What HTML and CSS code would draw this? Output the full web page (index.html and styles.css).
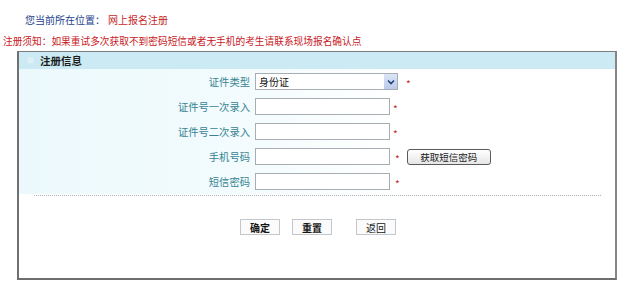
FILE: index.html
```html
<!DOCTYPE html>
<html lang="zh-CN">
<head>
<meta charset="utf-8">
<title>网上报名注册</title>
<link rel="stylesheet" href="styles.css">
</head>
<body>
<div class="location"><span class="loc-label">您当前所在位置：</span><span class="loc-current">网上报名注册</span></div>
<div class="notice">注册须知：如果重试多次获取不到密码短信或者无手机的考生请联系现场报名确认点</div>
<div class="box">
  <div class="box-head"><span class="head-icon"></span><span class="head-title">注册信息</span></div>
  <div class="rows">
    <div class="row">
      <label class="label">证件类型</label>
      <div class="select"><span class="select-text">身份证</span><span class="select-arrow"><svg width="8" height="6" viewBox="0 0 8 6"><path d="M1 1.5 L4 4.5 L7 1.5" fill="none" stroke="#24407a" stroke-width="1.6"/></svg></span></div>
      <span class="req req-wide">*</span>
    </div>
    <div class="row">
      <label class="label">证件号一次录入</label>
      <div class="input"></div>
      <span class="req">*</span>
    </div>
    <div class="row">
      <label class="label">证件号二次录入</label>
      <div class="input"></div>
      <span class="req">*</span>
    </div>
    <div class="row">
      <label class="label">手机号码</label>
      <div class="input"></div>
      <span class="req req-mid">*</span>
      <span class="sms-btn">获取短信密码</span>
    </div>
    <div class="row">
      <label class="label">短信密码</label>
      <div class="input"></div>
      <span class="req req-mid">*</span>
    </div>
  </div>
  <div class="divider"></div>
  <div class="actions">
    <span class="btn">确定</span>
    <span class="btn btn-reset">重置</span>
    <span class="btn btn-back">返回</span>
  </div>
</div>
</body>
</html>
```

FILE: styles.css
```css
html, body {
  margin: 0;
  padding: 0;
  background: #ffffff;
}
body {
  font-family: "Noto Sans CJK SC", "Liberation Sans", sans-serif;
  font-size: 10px;
  color: #222;
  width: 627px;
  height: 291px;
  overflow: hidden;
}
.location {
  padding: 14px 0 0 25px;
  line-height: 12px;
  height: 12px;
}
.loc-label {
  color: #233f8c;
  margin-right: 3px;
}
.loc-current {
  color: #c41f1f;
}
.notice {
  margin-top: 9px;
  padding-left: 3px;
  line-height: 12px;
  height: 12px;
  font-size: 9.7px;
  color: #c8201e;
}
.box {
  margin: 4px 0 0 17px;
  width: 600px;
  height: 229px;
  box-sizing: border-box;
  border: 1px solid #7c7c7c;
  border-left: 2px solid #707070;
  border-bottom: 2px solid #6e6e6e;
  border-right: 2px solid #858585;
  display: flex;
  flex-direction: column;
}
.box-head {
  height: 17px;
  background: #cbeaf3;
  display: flex;
  align-items: center;
}
.head-icon {
  width: 5px;
  height: 5px;
  margin-left: 8px;
  background: #dff1f7;
  border: 1px solid #d3ebf3;
}
.head-title {
  margin-left: 6px;
  font-weight: bold;
  font-size: 10.5px;
  color: #1c1c1c;
}
.rows {
  background: linear-gradient(to right, #ecf9fc 0%, #f2fbfd 35%, #ffffff 64%);
  display: flex;
  flex-direction: column;
}
.row {
  height: 25px;
  display: flex;
  align-items: center;
}
.label {
  width: 231px;
  text-align: right;
  color: #368392;
  margin-right: 5px;
  font-size: 10.3px;
}
.input {
  width: 135px;
  height: 17px;
  box-sizing: border-box;
  border: 1px solid #a7adb3;
  background: #ffffff;
}
.select {
  width: 143px;
  height: 17px;
  box-sizing: border-box;
  border: 1px solid #a7adb3;
  background: #ffffff;
  display: flex;
  align-items: center;
  justify-content: space-between;
}
.select-text {
  padding-left: 3px;
  color: #111;
}
.select-arrow {
  width: 13px;
  height: 15px;
  background: linear-gradient(#dbe5f7, #bccbeb);
  display: flex;
  align-items: center;
  justify-content: center;
}
.req {
  color: #c22828;
  margin-left: 3px;
  font-size: 10px;
  line-height: 10px;
  margin-top: 4px;
}
.req-wide {
  margin-left: 8px;
}
.req-mid {
  margin-left: 5px;
}
.sms-btn {
  margin-left: 7px;
  width: 84px;
  height: 16px;
  box-sizing: border-box;
  border: 1px solid #5a5a5a;
  border-radius: 3px;
  background: linear-gradient(#ffffff, #e6e6e6);
  display: flex;
  align-items: center;
  justify-content: center;
  color: #1a1a1a;
  font-size: 9.5px;
}
.divider {
  margin: 1px 14px 0 15px;
  border-top: 1px dotted #a9b3b9;
  height: 0;
}
.actions {
  margin-top: 23px;
  display: flex;
  justify-content: center;
  padding-left: 2px;
}
.btn {
  width: 40px;
  height: 16px;
  box-sizing: border-box;
  border: 1px solid #c3c7c9;
  background: #fbfbfb;
  display: flex;
  align-items: center;
  justify-content: center;
  color: #151515;
  font-weight: bold;
}
.btn-reset {
  margin-left: 12px;
}
.btn-back {
  margin-left: 24px;
  font-weight: normal;
}
```
